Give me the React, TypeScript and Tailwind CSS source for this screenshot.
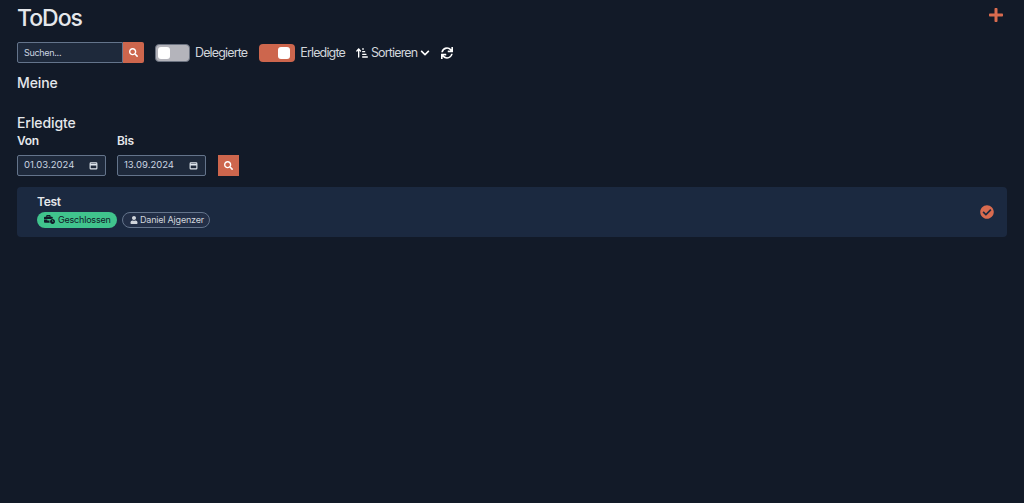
import React from 'react';
import { FaPlus, FaSearch, FaChevronDown, FaSync, FaCheckCircle, FaUser, FaBusinessTime } from 'react-icons/fa';
import { FaArrowUpShortWide } from 'react-icons/fa6';

function SearchButton({ className }: { className: string }) {
  return (
    <button className={`flex items-center justify-center bg-[#cd664d] text-white ${className}`}>
      <FaSearch className="h-[9px] w-[9px]" />
    </button>
  );
}

function Toggle({ on }: { on: boolean }) {
  return (
    <div
      className={`flex h-[18px] items-center rounded-[4px] ${
        on ? 'w-[36px] justify-end bg-[#cd664d] pr-[5px]' : 'w-[35px] justify-start border border-[#6b7280] bg-[#b4b4bb] pl-[2px]'
      }`}
    >
      <div className="h-[12px] w-[12px] rounded-[3px] bg-white" />
    </div>
  );
}

function DateField({ value }: { value: string }) {
  return (
    <div className="flex h-[21px] w-[89px] items-center justify-between rounded-[2px] border border-[#64748b] bg-[#1e293b] pl-[6px] pr-[7px] text-[9.5px] text-[#cbd5e1]">
      <span>{value}</span>
      <svg viewBox="0 0 24 24" className="h-[9px] w-[9px]" fill="none" stroke="#e2e8f0" strokeWidth="3">
        <rect x="3" y="5" width="18" height="16" rx="2" />
        <path d="M3 10h18" strokeWidth="4" />
      </svg>
    </div>
  );
}

export default function App() {
  return (
    <div className="min-h-[503px] bg-[#121a28] font-['Inter',sans-serif] text-[#e5e7eb]">
      <div className="px-[17px] pt-[3px]">
        <div className="flex items-start justify-between">
          <h1 className="text-[23px] leading-[30px] font-medium tracking-[-1px] text-[#e5e7eb]">ToDos</h1>
          <FaPlus className="mt-[4px] mr-[3px] h-[16px] w-[16px] text-[#d96b4f]" />
        </div>

        <div className="mt-[7px] flex h-[25px] items-center">
          <div className="flex h-[21px] w-[127px]">
            <div className="flex w-[106px] items-center rounded-l-[2px] border border-[#64748b] bg-[#1e293b] pl-[6px] text-[9px] tracking-[-0.3px] text-[#cbd5e1]">
              Suchen...
            </div>
            <SearchButton className="w-[21px] rounded-r-[2px]" />
          </div>
          <div className="ml-[11px]"><Toggle on={false} /></div>
          <span className="mt-[1px] ml-[5px] text-[12.5px] tracking-[-0.85px] text-[#d1d5db]">Delegierte</span>
          <div className="ml-[12px]"><Toggle on /></div>
          <span className="mt-[1px] ml-[5px] text-[12.5px] tracking-[-0.85px] text-[#d1d5db]">Erledigte</span>
          <FaArrowUpShortWide className="mt-[1px] ml-[11px] h-[12px] w-[12px] text-white" />
          <span className="mt-[1px] ml-[3px] text-[12.5px] tracking-[-0.85px] text-[#d1d5db]">Sortieren</span>
          <FaChevronDown className="mt-[1px] ml-[3px] h-[10px] w-[10px] text-white" />
          <FaSync className="mt-[1px] ml-[11px] h-[12px] w-[12px] text-white" />
        </div>

        <h2 className="mt-[8px] text-[14px] leading-[20px] font-medium tracking-[-0.1px] text-[#e5e7eb]">Meine</h2>
        <h2 className="mt-[20px] text-[14px] leading-[20px] font-medium tracking-[-0.1px] text-[#e5e7eb]">Erledigte</h2>

        <div className="flex items-end">
          <div className="w-[100px]">
            <div className="mb-[6px] text-[12px] leading-[16px] font-semibold tracking-[-0.3px] text-[#e5e7eb]">Von</div>
            <DateField value="01.03.2024" />
          </div>
          <div className="w-[101px]">
            <div className="mb-[6px] text-[12px] leading-[16px] font-semibold tracking-[-0.3px] text-[#e5e7eb]">Bis</div>
            <DateField value="13.09.2024" />
          </div>
          <SearchButton className="h-[21px] w-[21px]" />
        </div>

        <div className="mt-[11px] flex h-[50px] w-[990px] items-center justify-between rounded-[4px] bg-[#1b2940] pl-[20px] pr-[13px]">
          <div className="mb-[2px]">
            <div className="text-[12px] leading-[14px] font-semibold tracking-[-0.3px] text-[#e5e7eb]">Test</div>
            <div className="mt-[3px] flex items-center gap-[5px]">
              <span className="flex h-[16px] w-[80px] items-center gap-[3px] rounded-full bg-[#40c48d] pl-[7px] text-[9px] tracking-[-0.2px] text-[#111927]">
                <FaBusinessTime className="h-[11px] w-[11px]" />
                Geschlossen
              </span>
              <span className="flex h-[16px] w-[88px] items-center gap-[2px] rounded-full border border-[#64748b] bg-[#232f47] pl-[7px] text-[9px] tracking-[-0.2px] text-[#d1d5db]">
                <FaUser className="h-[8px] w-[8px]" />
                Daniel Ajgenzer
              </span>
            </div>
          </div>
          <FaCheckCircle className="h-[14px] w-[14px] text-[#d96b4f]" />
        </div>
      </div>
    </div>
  );
}
